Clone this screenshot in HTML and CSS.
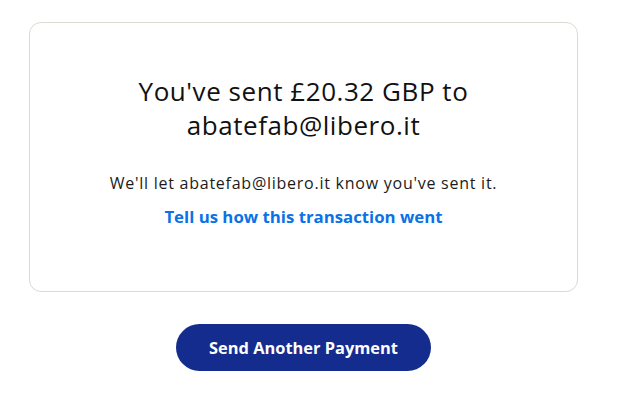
FILE: index.html
```html
<!DOCTYPE html>
<html lang="en">
<head>
<meta charset="utf-8">
<title>Payment sent</title>
<link rel="stylesheet" href="styles.css">
</head>
<body>
<main class="page">
  <section class="card">
    <h1 class="title">You've sent £20.32 GBP to<br>abatefab@libero.it</h1>
    <p class="note">We'll let abatefab@libero.it know you've sent it.</p>
    <a class="feedback" href="#">Tell us how this transaction went</a>
  </section>
  <div class="actions">
    <button class="btn-primary" type="button">Send Another Payment</button>
  </div>
</main>
</body>
</html>
```

FILE: styles.css
```css
* { box-sizing: border-box; }
html, body { margin: 0; padding: 0; background: #ffffff; }
body {
  font-family: "Open Sans", Lato, "Liberation Sans", sans-serif;
  color: #1b1b1b;
}
.page {
  width: 549px;
  margin: 22px 0 0 29px;
  display: flex;
  flex-direction: column;
  align-items: center;
}
.card {
  width: 100%;
  height: 270px;
  border: 1px solid #dcd9d2;
  border-radius: 12px;
  display: flex;
  flex-direction: column;
  align-items: center;
  padding-top: 51px;
}
.title {
  margin: 0;
  font-size: 26px;
  line-height: 34px;
  font-weight: 400;
  letter-spacing: 0.55px;
  text-align: center;
  color: #111111;
}
.note {
  margin: 30px 0 0;
  font-size: 16px;
  line-height: 22px;
  letter-spacing: 0.75px;
  color: #1b1b1b;
}
.feedback {
  margin-top: 12px;
  font-size: 16.8px;
  line-height: 22px;
  font-weight: 700;
  color: #0a72e6;
  text-decoration: none;
}
.actions {
  margin-top: 32px;
}
.btn-primary {
  width: 255px;
  height: 47px;
  border: none;
  border-radius: 24px;
  background: #142c8e;
  color: #ffffff;
  font-family: inherit;
  font-size: 16.4px;
  font-weight: 700;
}
```
